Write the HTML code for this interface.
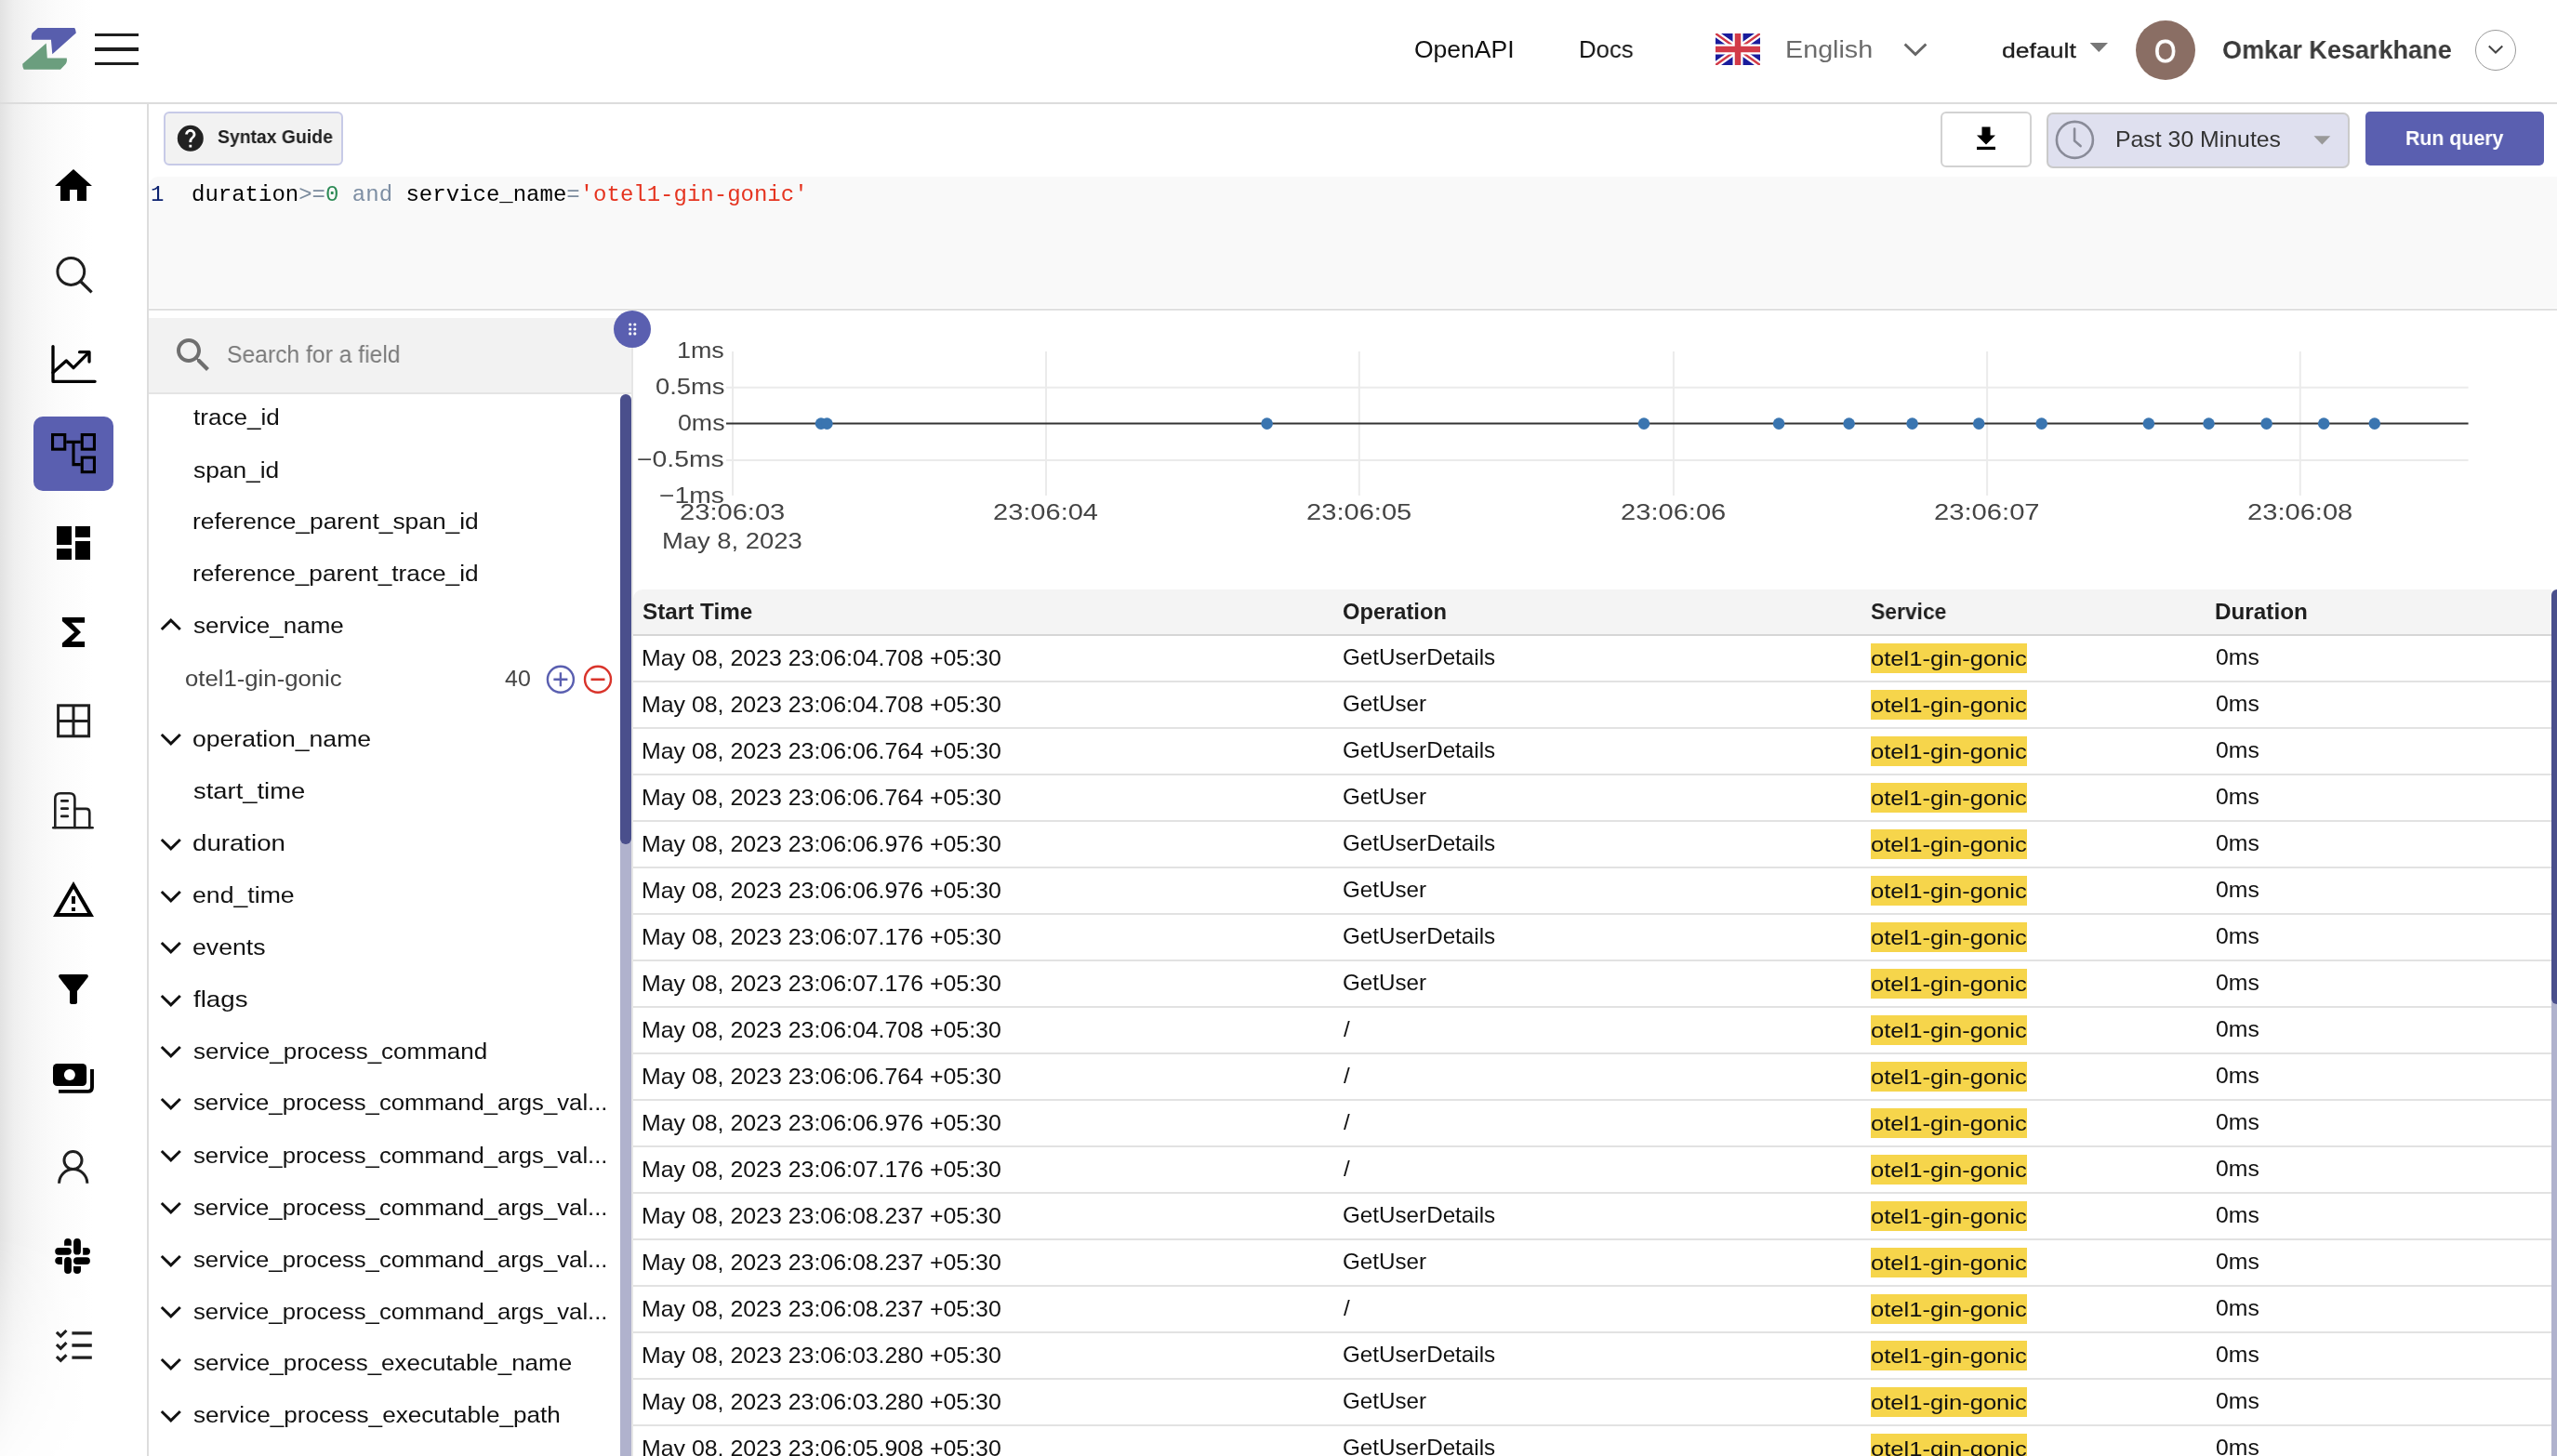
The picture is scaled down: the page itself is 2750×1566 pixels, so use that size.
<!DOCTYPE html>
<html><head><meta charset="utf-8"><style>
html,body{margin:0;padding:0;}
body{width:2750px;height:1566px;position:relative;overflow:hidden;background:#fff;font-family:"Liberation Sans",sans-serif;}
.t{position:absolute;white-space:nowrap;line-height:1;transform-origin:0 0;will-change:transform;}
svg{overflow:visible;}
</style></head><body>
<div style="position:absolute;left:0.0px;top:0.0px;width:100.0px;height:1566.0px;background:linear-gradient(to right,#e2e2e2 0px,#efefef 15px,#f6f6f6 35px,#fbfbfb 60px,#ffffff 100px);-webkit-mask-image:linear-gradient(to bottom,#000 0px,#000 1330px,rgba(0,0,0,0.55) 1450px,rgba(0,0,0,0.1) 1566px);"></div>
<div style="position:absolute;left:0.0px;top:110.0px;width:2750.0px;height:2.0px;background:#dcdcdc;"></div>
<div style="position:absolute;left:158.0px;top:112.0px;width:2.0px;height:1454.0px;background:#dddddd;"></div>
<svg style="position:absolute;left:0px;top:0px" width="100" height="100" viewBox="0 0 100 100"><path fill="#585ead" d="M40.8 30.1 L80.1 30.1 Q81.2 31 81.8 35.6 L56.3 58.2 L54.9 42.8 L34 42.8 Q33.3 38.5 34.5 35.8 Z"/><path fill="#6b9e7e" d="M49.7 46.5 L50.8 62.4 L71.8 62.4 Q72.5 67 70 69.5 L65 74.7 L25.7 74.7 Q24 72 24.2 68.8 Z"/></svg>
<div style="position:absolute;left:102.0px;top:35.7px;width:46.6px;height:3.8px;background:#1e1e1e;"></div>
<div style="position:absolute;left:102.0px;top:51.1px;width:46.6px;height:3.8px;background:#1e1e1e;"></div>
<div style="position:absolute;left:102.0px;top:66.5px;width:46.6px;height:3.8px;background:#1e1e1e;"></div>
<div class="t" style="left:1520.74px;top:40.2px;font-size:26px;color:#111;font-weight:400;font-family:'Liberation Sans', sans-serif;transform:scaleX(1.0197);">OpenAPI</div>
<div class="t" style="left:1697.94px;top:40.2px;font-size:26px;color:#111;font-weight:400;font-family:'Liberation Sans', sans-serif;transform:scaleX(0.9898);">Docs</div>
<svg style="position:absolute;left:1845px;top:35.8px;overflow:hidden" width="48" height="34" viewBox="0 0 48 34"><rect width="48" height="34" fill="#1a1c9c"/><path d="M0 0L48 34M48 0L0 34" stroke="#fff" stroke-width="7"/><path d="M0 0L48 34M48 0L0 34" stroke="#d23a48" stroke-width="2.5"/><path d="M24 0V34M0 17H48" stroke="#fff" stroke-width="11"/><path d="M24 0V34M0 17H48" stroke="#d23a48" stroke-width="6.5"/></svg>
<div class="t" style="left:1920.10px;top:40.2px;font-size:26px;color:#6b6b6b;font-weight:400;font-family:'Liberation Sans', sans-serif;transform:scaleX(1.1048);">English</div>
<svg style="position:absolute;left:2045px;top:44px" width="30" height="20" viewBox="0 0 30 20"><path d="M3.6 3.5 L15 14.5 L26.4 3.5" fill="none" stroke="#666" stroke-width="3"/></svg>
<div class="t" style="left:2153.14px;top:42.5px;font-size:22.8px;color:#1e1e1e;font-weight:400;font-family:'Liberation Sans', sans-serif;transform:scaleX(1.1658);-webkit-text-stroke:0.3px #1e1e1e;">default</div>
<svg style="position:absolute;left:2246px;top:45px" width="24" height="13" viewBox="0 0 24 13"><path d="M1.6 0.9 L21 0.9 L11.3 11Z" fill="#777"/></svg>
<div style="position:absolute;left:2296.8px;top:21.9px;width:64px;height:64px;border-radius:50%;background:#8a6e64;"></div>
<div class="t" style="left:2317.29px;top:37.7px;font-size:35.5px;color:#fff;font-weight:400;font-family:'Liberation Sans', sans-serif;transform:scaleX(0.8492);-webkit-text-stroke:0.9px #fff;">O</div>
<div class="t" style="left:2389.62px;top:39.6px;font-size:27.5px;color:#3a3a3a;font-weight:700;font-family:'Liberation Sans', sans-serif;transform:scaleX(0.9840);">Omkar Kesarkhane</div>
<div style="position:absolute;left:2661.8px;top:31.7px;width:44.4px;height:44.4px;border-radius:50%;border:1px solid #9a9a9a;box-sizing:border-box;"></div>
<svg style="position:absolute;left:2670px;top:44px" width="30" height="20" viewBox="0 0 30 20"><path d="M6.8 5.5 L14 12.5 L21.3 5.5" fill="none" stroke="#444" stroke-width="2"/></svg>
<div style="position:absolute;left:36.0px;top:448.0px;width:86.0px;height:80.0px;background:#5a5fb0;border-radius:10px;"></div>
<svg style="position:absolute;left:55px;top:176px" width="48" height="48" viewBox="0 0 24 24"><path d="M10 20v-6h4v6h5v-8h3L12 3 2 12h3v8z" fill="#000"/></svg>
<svg style="position:absolute;left:55px;top:272px" width="48" height="48" viewBox="0 96 48 48"><circle cx="21.3" cy="116" r="14.4" fill="none" stroke="#1f1f1f" stroke-width="3"/><path d="M32 127 L43.6 138.4" stroke="#1f1f1f" stroke-width="3.2"/></svg>
<svg style="position:absolute;left:55px;top:368px" width="48" height="48" viewBox="0 0 48 48"><g fill="none" stroke="#000" stroke-width="3.3" stroke-linecap="round" stroke-linejoin="round"><path d="M2 4.6 V42.3 H47.1"/><path d="M2 32.7 L16.3 20 L24 27.7 L40.5 11.2"/><path d="M30.6 10.7 H41 V21"/></g></svg>
<svg style="position:absolute;left:55px;top:464px" width="48" height="48" viewBox="0 0 48 48"><g fill="none" stroke="#000" stroke-width="3.1"><rect x="1.55" y="3.55" width="13.2" height="15.6"/><rect x="33.25" y="3.55" width="13.2" height="15.6"/><rect x="33.25" y="28.05" width="13.2" height="15.6"/><path d="M16.3 11.4 H31.7 M24 11.4 V35.6 H31.7"/></g></svg>
<svg style="position:absolute;left:55px;top:560px" width="48" height="48" viewBox="0 0 24 24"><path d="M3 13h8V3H3v10zm0 8h8v-6H3v6zm10 0h8V11h-8v10zm0-18v6h8V3h-8z" fill="#000"/></svg>
<svg style="position:absolute;left:55px;top:656px" width="48" height="48" viewBox="0 0 48 48"><path d="M11.9 8 H36.1 V13.8 H21.8 L32 24 L21.8 33.9 H36.1 V39.9 H11.9 V35.8 L25.1 24 L11.9 12.1 Z" fill="#000"/></svg>
<svg style="position:absolute;left:55px;top:752px" width="48" height="48" viewBox="0 0 48 48"><g fill="none" stroke="#1f1f1f" stroke-width="3"><rect x="7.6" y="6.8" width="33" height="33"/><path d="M24 6.8 V39.8 M7.6 23.4 H40.6"/></g></svg>
<svg style="position:absolute;left:55px;top:848px" width="48" height="48" viewBox="0 0 48 48"><g fill="none" stroke="#1f1f1f" stroke-width="2.6" stroke-linecap="round"><path d="M4.3 42 V11 Q4.3 5.3 10 5.3 H19.8 Q25.4 5.3 25.4 11 V42"/><path d="M25.4 21.9 H37.5 Q41.3 21.9 41.3 26 V42"/><path d="M2.3 42.2 H44.6"/><path d="M11.3 13.4 H17.7 M11.3 21.7 H17.7 M11.3 29.9 H17.7" stroke-width="2.8"/></g></svg>
<svg style="position:absolute;left:55px;top:944px" width="48" height="48" viewBox="0 0 24 24"><path d="M12 5.99L19.53 19H4.47L12 5.99M12 2L1 21h22L12 2zm1 14h-2v2h2v-2zm0-6h-2v4h2v-4z" fill="#000"/></svg>
<svg style="position:absolute;left:55px;top:1040px" width="48" height="48" viewBox="0 0 24 24"><path d="M4.25 5.61C6.27 8.2 10 13 10 13v6c0 .55.45 1 1 1h2c.55 0 1-.45 1-1v-6s3.72-4.8 5.74-7.39c.51-.66.04-1.61-.79-1.61H5.04c-.83 0-1.3.95-.79 1.61z" fill="#000"/></svg>
<svg style="position:absolute;left:55px;top:1136px" width="48" height="48" viewBox="0 0 48 48"><rect x="2" y="8" width="36.1" height="24" rx="4.5" fill="#000"/><circle cx="19.9" cy="20" r="6" fill="#fff"/><path d="M44 13.9 V33.5 Q44 37.9 39.5 37.9 H8.1" fill="none" stroke="#000" stroke-width="3.9"/></svg>
<svg style="position:absolute;left:55px;top:1232px" width="48" height="48" viewBox="0 0 48 48"><g fill="none" stroke="#1f1f1f" stroke-width="3"><circle cx="23.5" cy="16" r="9.5"/><path d="M8.6 40.7 A15 15 0 0 1 38.8 40.7"/></g></svg>
<svg style="position:absolute;left:55px;top:1328px" width="48" height="48" viewBox="0 0 48 48"><g stroke="#000" stroke-width="7.8" stroke-linecap="round"><path d="M28 7.9 V17.7 M18 27.9 V38 M8.1 17.85 H17.9 M27.9 28.05 H38"/></g><g fill="#000"><path d="M21.8 11.7 H14.1 V7.9 A3.85 3.85 0 0 1 21.8 7.9 Z"/><path d="M34.2 21.8 V13.9 H38 A3.9 3.9 0 0 1 38 21.8 Z"/><path d="M4.2 28.05 A3.85 3.85 0 0 1 8.05 24.1 H11.9 V32 H8.05 A3.85 3.85 0 0 1 4.2 28.05 Z"/><path d="M24 34 H32 V38 A4 4 0 0 1 24 38 Z"/></g></svg>
<svg style="position:absolute;left:55px;top:1424px" width="48" height="48" viewBox="0 0 48 48"><g fill="none" stroke="#1f1f1f" stroke-width="3.3"><path d="M22.4 9.8 H43.8 M22.4 23 H43.8 M22.4 36.1 H43.8"/><path d="M5.9 8.9 L10.3 13.1 L16.4 7 M5.9 22.1 L10.3 26.3 L16.4 20.2 M5.9 35.2 L10.3 39.4 L16.4 33.3" stroke-width="3.1"/></g></svg>
<div style="position:absolute;left:176.4px;top:120px;width:193.1px;height:57.5px;box-sizing:border-box;border:2px solid #c7cae7;border-radius:6px;background:#f2f2f2;"></div>
<svg style="position:absolute;left:188.2px;top:131.8px" width="33.6" height="33.6" viewBox="0 0 24 24"><circle cx="12" cy="12" r="10" fill="#222"/><path fill="#fff" d="M13 19h-2v-2h2v2zm2.07-7.75l-.9.92C13.45 12.9 13 13.5 13 15h-2v-.5c0-1.1.45-2.1 1.17-2.83l1.24-1.26c.37-.36.59-.86.59-1.41 0-1.1-.9-2-2-2s-2 .9-2 2H8c0-2.21 1.79-4 4-4s4 1.79 4 4c0 .88-.36 1.68-.93 2.25z"/></svg>
<div class="t" style="left:234.31px;top:138.2px;font-size:19.8px;color:#1f1f1f;font-weight:700;font-family:'Liberation Sans', sans-serif;transform:scaleX(0.9799);">Syntax Guide</div>
<div style="position:absolute;left:2087.3px;top:120.3px;width:98px;height:59.4px;box-sizing:border-box;border:2px solid #d2d2d2;border-radius:6px;background:#fff;"></div>
<svg style="position:absolute;left:2124px;top:135px" width="24" height="28" viewBox="0 0 24 28"><path d="M7.5 1.5 H16.5 V10.5 H22 L12 20.5 L2 10.5 H7.5Z" fill="#000"/><rect x="2" y="22.8" width="20" height="3.3" fill="#000"/></svg>
<div style="position:absolute;left:2201.1px;top:120.6px;width:326.4px;height:60.7px;box-sizing:border-box;border:2px solid #cacaca;border-radius:7px;background:#dfe0ef;"></div>
<svg style="position:absolute;left:2209px;top:128px" width="46" height="46" viewBox="0 0 46 46"><circle cx="22.4" cy="22.4" r="19.5" fill="none" stroke="#898b98" stroke-width="2.6"/><path d="M22.1 10.6 V23.5 L28.6 29.1" fill="none" stroke="#898b98" stroke-width="2.6" stroke-linecap="round"/></svg>
<div class="t" style="left:2274.91px;top:137.7px;font-size:24.0px;color:#333;font-weight:400;font-family:'Liberation Sans', sans-serif;transform:scaleX(1.0345);">Past 30 Minutes</div>
<svg style="position:absolute;left:2486px;top:144px" width="24" height="14" viewBox="0 0 24 14"><path d="M2.5 2.2 H20.3 L11.4 11.5Z" fill="#999"/></svg>
<div style="position:absolute;left:2544px;top:120.1px;width:191.7px;height:57.7px;border-radius:5px;background:#5a5fb0;"></div>
<div class="t" style="left:2586.72px;top:137.7px;font-size:22.2px;color:#fff;font-weight:700;font-family:'Liberation Sans', sans-serif;transform:scaleX(0.9610);">Run query</div>
<div style="position:absolute;left:160.0px;top:190.0px;width:2590.0px;height:141.0px;background:#f9f9f9;border-top-left-radius:10px;"></div>
<div style="position:absolute;left:160.0px;top:331.5px;width:2590.0px;height:2.0px;background:#e0e0e0;"></div>
<div class="t" style="left:161.7px;top:197.6px;font-size:24px;color:#0b216f;font-weight:400;font-family:'Liberation Mono', monospace;">1</div>
<div class="t" style="left:205.5px;top:197.6px;font-size:24px;color:#000;font-weight:400;font-family:'Liberation Mono', monospace;"><span style="color:#000">duration</span><span style="color:#7b8b9d">&gt;=</span><span style="color:#2c8a55">0</span> <span style="color:#7d8ea3">and</span> <span style="color:#000">service_name</span><span style="color:#7b8b9d">=</span><span style="color:#e5331f">'otel1-gin-gonic'</span></div>
<div style="position:absolute;left:160.0px;top:341.6px;width:519.5px;height:80.4px;background:#f2f2f2;"></div>
<div style="position:absolute;left:160.0px;top:422.0px;width:519.5px;height:2.0px;background:#e4e4e4;"></div>
<svg style="position:absolute;left:183.9px;top:358px" width="48" height="48" viewBox="0 0 24 24"><path fill="#6f6f6f" d="M15.5 14h-.79l-.28-.27C15.41 12.59 16 11.11 16 9.5 16 5.91 13.09 3 9.5 3S3 5.91 3 9.5 5.91 16 9.5 16c1.61 0 3.09-.59 4.23-1.57l.27.28v.79l5 4.99L20.49 19l-4.99-5zm-6 0C7.01 14 5 11.99 5 9.5S7.01 5 9.5 5 14 7.01 14 9.5 11.99 14 9.5 14z"/></svg>
<div class="t" style="left:243.51px;top:369.1px;font-size:25.4px;color:#7a7a7a;font-weight:400;font-family:'Liberation Sans', sans-serif;transform:scaleX(0.9717);">Search for a field</div>
<div style="position:absolute;left:679.0px;top:333.5px;width:2.0px;height:1232.5px;background:#e6e6e6;"></div>
<div style="position:absolute;left:667.0px;top:900.0px;width:12.0px;height:666.0px;background:#b0b2cd;"></div>
<div style="position:absolute;left:667.0px;top:424.0px;width:12.0px;height:484.0px;background:#4a4f8c;border-radius:6px;"></div>
<div class="t" style="left:208.24px;top:437.1px;font-size:24.4px;color:#111;font-weight:400;font-family:'Liberation Sans', sans-serif;transform:scaleX(1.0682);">trace_id</div>
<div class="t" style="left:207.97px;top:493.5px;font-size:24.4px;color:#111;font-weight:400;font-family:'Liberation Sans', sans-serif;transform:scaleX(1.0800);">span_id</div>
<div class="t" style="left:206.92px;top:548.9px;font-size:24.4px;color:#111;font-weight:400;font-family:'Liberation Sans', sans-serif;transform:scaleX(1.0807);">reference_parent_span_id</div>
<div class="t" style="left:206.93px;top:605.4px;font-size:24.4px;color:#111;font-weight:400;font-family:'Liberation Sans', sans-serif;transform:scaleX(1.0752);">reference_parent_trace_id</div>
<div class="t" style="left:207.98px;top:660.6px;font-size:24.4px;color:#111;font-weight:400;font-family:'Liberation Sans', sans-serif;transform:scaleX(1.0656);">service_name</div>
<svg style="position:absolute;left:170px;top:663.3px" width="28" height="20" viewBox="0 0 28 20"><path d="M3.8 14 L13.8 4.2 L23.8 14" fill="none" stroke="#111" stroke-width="3"/></svg>
<div class="t" style="left:207.44px;top:782.7px;font-size:24.4px;color:#111;font-weight:400;font-family:'Liberation Sans', sans-serif;transform:scaleX(1.0894);">operation_name</div>
<svg style="position:absolute;left:170px;top:785.4px" width="28" height="20" viewBox="0 0 28 20"><path d="M3.8 5 L13.8 14.8 L23.8 5" fill="none" stroke="#111" stroke-width="3"/></svg>
<div class="t" style="left:207.95px;top:838.5px;font-size:24.4px;color:#111;font-weight:400;font-family:'Liberation Sans', sans-serif;transform:scaleX(1.1225);">start_time</div>
<div class="t" style="left:207.39px;top:895.3px;font-size:24.4px;color:#111;font-weight:400;font-family:'Liberation Sans', sans-serif;transform:scaleX(1.1336);">duration</div>
<svg style="position:absolute;left:170px;top:898.0px" width="28" height="20" viewBox="0 0 28 20"><path d="M3.8 5 L13.8 14.8 L23.8 5" fill="none" stroke="#111" stroke-width="3"/></svg>
<div class="t" style="left:207.43px;top:951.1px;font-size:24.4px;color:#111;font-weight:400;font-family:'Liberation Sans', sans-serif;transform:scaleX(1.0932);">end_time</div>
<svg style="position:absolute;left:170px;top:953.8px" width="28" height="20" viewBox="0 0 28 20"><path d="M3.8 5 L13.8 14.8 L23.8 5" fill="none" stroke="#111" stroke-width="3"/></svg>
<div class="t" style="left:207.43px;top:1006.6px;font-size:24.4px;color:#111;font-weight:400;font-family:'Liberation Sans', sans-serif;transform:scaleX(1.0929);">events</div>
<svg style="position:absolute;left:170px;top:1009.3px" width="28" height="20" viewBox="0 0 28 20"><path d="M3.8 5 L13.8 14.8 L23.8 5" fill="none" stroke="#111" stroke-width="3"/></svg>
<div class="t" style="left:208.22px;top:1062.9px;font-size:24.4px;color:#111;font-weight:400;font-family:'Liberation Sans', sans-serif;transform:scaleX(1.1352);">flags</div>
<svg style="position:absolute;left:170px;top:1065.6px" width="28" height="20" viewBox="0 0 28 20"><path d="M3.8 5 L13.8 14.8 L23.8 5" fill="none" stroke="#111" stroke-width="3"/></svg>
<div class="t" style="left:207.98px;top:1118.7px;font-size:24.4px;color:#111;font-weight:400;font-family:'Liberation Sans', sans-serif;transform:scaleX(1.0649);">service_process_command</div>
<svg style="position:absolute;left:170px;top:1121.3999999999999px" width="28" height="20" viewBox="0 0 28 20"><path d="M3.8 5 L13.8 14.8 L23.8 5" fill="none" stroke="#111" stroke-width="3"/></svg>
<div class="t" style="left:207.99px;top:1174.4px;font-size:24.4px;color:#111;font-weight:400;font-family:'Liberation Sans', sans-serif;transform:scaleX(1.0533);">service_process_command_args_val...</div>
<svg style="position:absolute;left:170px;top:1177.1px" width="28" height="20" viewBox="0 0 28 20"><path d="M3.8 5 L13.8 14.8 L23.8 5" fill="none" stroke="#111" stroke-width="3"/></svg>
<div class="t" style="left:207.99px;top:1230.7px;font-size:24.4px;color:#111;font-weight:400;font-family:'Liberation Sans', sans-serif;transform:scaleX(1.0533);">service_process_command_args_val...</div>
<svg style="position:absolute;left:170px;top:1233.3999999999999px" width="28" height="20" viewBox="0 0 28 20"><path d="M3.8 5 L13.8 14.8 L23.8 5" fill="none" stroke="#111" stroke-width="3"/></svg>
<div class="t" style="left:207.99px;top:1286.7px;font-size:24.4px;color:#111;font-weight:400;font-family:'Liberation Sans', sans-serif;transform:scaleX(1.0533);">service_process_command_args_val...</div>
<svg style="position:absolute;left:170px;top:1289.3999999999999px" width="28" height="20" viewBox="0 0 28 20"><path d="M3.8 5 L13.8 14.8 L23.8 5" fill="none" stroke="#111" stroke-width="3"/></svg>
<div class="t" style="left:207.99px;top:1343.0px;font-size:24.4px;color:#111;font-weight:400;font-family:'Liberation Sans', sans-serif;transform:scaleX(1.0533);">service_process_command_args_val...</div>
<svg style="position:absolute;left:170px;top:1345.7px" width="28" height="20" viewBox="0 0 28 20"><path d="M3.8 5 L13.8 14.8 L23.8 5" fill="none" stroke="#111" stroke-width="3"/></svg>
<div class="t" style="left:207.99px;top:1398.7px;font-size:24.4px;color:#111;font-weight:400;font-family:'Liberation Sans', sans-serif;transform:scaleX(1.0533);">service_process_command_args_val...</div>
<svg style="position:absolute;left:170px;top:1401.3999999999999px" width="28" height="20" viewBox="0 0 28 20"><path d="M3.8 5 L13.8 14.8 L23.8 5" fill="none" stroke="#111" stroke-width="3"/></svg>
<div class="t" style="left:207.98px;top:1454.4px;font-size:24.4px;color:#111;font-weight:400;font-family:'Liberation Sans', sans-serif;transform:scaleX(1.0648);">service_process_executable_name</div>
<svg style="position:absolute;left:170px;top:1457.1px" width="28" height="20" viewBox="0 0 28 20"><path d="M3.8 5 L13.8 14.8 L23.8 5" fill="none" stroke="#111" stroke-width="3"/></svg>
<div class="t" style="left:207.98px;top:1510.4px;font-size:24.4px;color:#111;font-weight:400;font-family:'Liberation Sans', sans-serif;transform:scaleX(1.0703);">service_process_executable_path</div>
<svg style="position:absolute;left:170px;top:1513.1px" width="28" height="20" viewBox="0 0 28 20"><path d="M3.8 5 L13.8 14.8 L23.8 5" fill="none" stroke="#111" stroke-width="3"/></svg>
<div class="t" style="left:199.47px;top:717.8px;font-size:24.7px;color:#444;font-weight:400;font-family:'Liberation Sans', sans-serif;transform:scaleX(1.0415);">otel1-gin-gonic</div>
<div class="t" style="left:543.20px;top:717.8px;font-size:24.7px;color:#444;font-weight:400;font-family:'Liberation Sans', sans-serif;transform:scaleX(1.0120);">40</div>
<svg style="position:absolute;left:586px;top:714px" width="34" height="34" viewBox="0 0 34 34"><circle cx="16.9" cy="16.8" r="14" fill="none" stroke="#5a5fb0" stroke-width="2.4"/><path d="M16.9 9.3 V24.3 M9.4 16.8 H24.4" stroke="#5a5fb0" stroke-width="2.4"/></svg>
<svg style="position:absolute;left:626px;top:714px" width="34" height="34" viewBox="0 0 34 34"><circle cx="17" cy="16.8" r="14" fill="none" stroke="#d9342b" stroke-width="2.4"/><path d="M9.5 16.8 H24.5" stroke="#d9342b" stroke-width="2.6"/></svg>
<div style="position:absolute;left:659.8px;top:334px;width:40px;height:40px;border-radius:50%;background:#5a5fb0;"></div>
<svg style="position:absolute;left:672px;top:346px" width="16" height="16" viewBox="0 0 16 16"><g fill="#fff"><circle cx="5.7" cy="3" r="1.6"/><circle cx="10.8" cy="3" r="1.6"/><circle cx="5.7" cy="8" r="1.6"/><circle cx="10.8" cy="8" r="1.6"/><circle cx="5.7" cy="12.9" r="1.6"/><circle cx="10.8" cy="12.9" r="1.6"/></g></svg>
<svg style="position:absolute;left:0;top:0" width="2750" height="1566"><path d="M788 378 V533" stroke="#ebebeb" stroke-width="2"/><path d="M1125 378 V533" stroke="#ebebeb" stroke-width="2"/><path d="M1461.8 378 V533" stroke="#ebebeb" stroke-width="2"/><path d="M1799.9 378 V533" stroke="#ebebeb" stroke-width="2"/><path d="M2137.1 378 V533" stroke="#ebebeb" stroke-width="2"/><path d="M2473.8 378 V533" stroke="#ebebeb" stroke-width="2"/><path d="M781 416.7 H2654.6" stroke="#ebebeb" stroke-width="2"/><path d="M781 494.9 H2654.6" stroke="#ebebeb" stroke-width="2"/><path d="M781 455.6 H2654.6" stroke="#333" stroke-width="2"/><circle cx="883" cy="455.6" r="6.3" fill="#3a75b0"/><circle cx="889.4" cy="455.6" r="6.3" fill="#3a75b0"/><circle cx="1362.6" cy="455.6" r="6.3" fill="#3a75b0"/><circle cx="1768" cy="455.6" r="6.3" fill="#3a75b0"/><circle cx="1913.1" cy="455.6" r="6.3" fill="#3a75b0"/><circle cx="1988.6" cy="455.6" r="6.3" fill="#3a75b0"/><circle cx="2056.6" cy="455.6" r="6.3" fill="#3a75b0"/><circle cx="2128.2" cy="455.6" r="6.3" fill="#3a75b0"/><circle cx="2195.7" cy="455.6" r="6.3" fill="#3a75b0"/><circle cx="2310.9" cy="455.6" r="6.3" fill="#3a75b0"/><circle cx="2375.5" cy="455.6" r="6.3" fill="#3a75b0"/><circle cx="2437.6" cy="455.6" r="6.3" fill="#3a75b0"/><circle cx="2499.2" cy="455.6" r="6.3" fill="#3a75b0"/><circle cx="2553.8" cy="455.6" r="6.3" fill="#3a75b0"/></svg>
<div class="t" style="left:728.42px;top:366.2px;font-size:23.5px;color:#444;font-weight:400;font-family:'Liberation Sans', sans-serif;transform:scaleX(1.1440);">1ms</div>
<div class="t" style="left:704.78px;top:404.7px;font-size:23.5px;color:#444;font-weight:400;font-family:'Liberation Sans', sans-serif;transform:scaleX(1.1632);">0.5ms</div>
<div class="t" style="left:728.70px;top:443.6px;font-size:23.5px;color:#444;font-weight:400;font-family:'Liberation Sans', sans-serif;transform:scaleX(1.1376);">0ms</div>
<div class="t" style="left:685.47px;top:482.7px;font-size:23.5px;color:#444;font-weight:400;font-family:'Liberation Sans', sans-serif;transform:scaleX(1.2067);">−0.5ms</div>
<div class="t" style="left:709.37px;top:521.5px;font-size:23.5px;color:#444;font-weight:400;font-family:'Liberation Sans', sans-serif;transform:scaleX(1.2023);">−1ms</div>
<div class="t" style="left:731.14px;top:539.6px;font-size:23.5px;color:#444;font-weight:400;font-family:'Liberation Sans', sans-serif;transform:scaleX(1.2387);">23:06:03</div>
<div class="t" style="left:1068.15px;top:539.6px;font-size:23.5px;color:#444;font-weight:400;font-family:'Liberation Sans', sans-serif;transform:scaleX(1.2354);">23:06:04</div>
<div class="t" style="left:1404.94px;top:539.6px;font-size:23.5px;color:#444;font-weight:400;font-family:'Liberation Sans', sans-serif;transform:scaleX(1.2387);">23:06:05</div>
<div class="t" style="left:1743.04px;top:539.6px;font-size:23.5px;color:#444;font-weight:400;font-family:'Liberation Sans', sans-serif;transform:scaleX(1.2387);">23:06:06</div>
<div class="t" style="left:2080.24px;top:539.6px;font-size:23.5px;color:#444;font-weight:400;font-family:'Liberation Sans', sans-serif;transform:scaleX(1.2419);">23:06:07</div>
<div class="t" style="left:2416.94px;top:539.6px;font-size:23.5px;color:#444;font-weight:400;font-family:'Liberation Sans', sans-serif;transform:scaleX(1.2387);">23:06:08</div>
<div class="t" style="left:711.61px;top:570.5px;font-size:23px;color:#444;font-weight:400;font-family:'Liberation Sans', sans-serif;transform:scaleX(1.1912);">May 8, 2023</div>
<div style="position:absolute;left:681.0px;top:634.0px;width:2063.0px;height:48.0px;background:#f4f4f4;border-top-left-radius:10px;"></div>
<div style="position:absolute;left:681.0px;top:682.0px;width:2063.0px;height:2.0px;background:#d6d6d6;"></div>
<div class="t" style="left:691.41px;top:647.0px;font-size:23.7px;color:#1f1f1f;font-weight:700;font-family:'Liberation Sans', sans-serif;transform:scaleX(1.0256);">Start Time</div>
<div class="t" style="left:1443.95px;top:646.9px;font-size:23.7px;color:#1f1f1f;font-weight:700;font-family:'Liberation Sans', sans-serif;transform:scaleX(0.9997);">Operation</div>
<div class="t" style="left:2012.14px;top:647.0px;font-size:23.7px;color:#1f1f1f;font-weight:700;font-family:'Liberation Sans', sans-serif;transform:scaleX(0.9658);">Service</div>
<div class="t" style="left:2381.94px;top:647.0px;font-size:23.7px;color:#1f1f1f;font-weight:700;font-family:'Liberation Sans', sans-serif;transform:scaleX(1.0247);">Duration</div>
<div style="position:absolute;left:681.0px;top:732.0px;width:2063.0px;height:2.0px;background:#e2e2e2;"></div>
<div class="t" style="left:689.91px;top:695.7px;font-size:23.8px;color:#111;font-weight:400;font-family:'Liberation Sans', sans-serif;transform:scaleX(1.0458);">May 08, 2023 23:06:04.708 +05:30</div>
<div class="t" style="left:1443.69px;top:696.2px;font-size:23.2px;color:#111;font-weight:400;font-family:'Liberation Sans', sans-serif;transform:scaleX(1.0442);">GetUserDetails</div>
<div style="position:absolute;left:2012.0px;top:692.0px;width:168.0px;height:32.0px;background:#f6d54b;"></div>
<div class="t" style="left:2011.98px;top:696.5px;font-size:22.8px;color:#111;font-weight:400;font-family:'Liberation Sans', sans-serif;transform:scaleX(1.1222);">otel1-gin-gonic</div>
<div class="t" style="left:2382.66px;top:696.0px;font-size:23.4px;color:#111;font-weight:400;font-family:'Liberation Sans', sans-serif;transform:scaleX(1.0584);">0ms</div>
<div style="position:absolute;left:681.0px;top:782.0px;width:2063.0px;height:2.0px;background:#e2e2e2;"></div>
<div class="t" style="left:689.91px;top:745.7px;font-size:23.8px;color:#111;font-weight:400;font-family:'Liberation Sans', sans-serif;transform:scaleX(1.0458);">May 08, 2023 23:06:04.708 +05:30</div>
<div class="t" style="left:1443.69px;top:746.2px;font-size:23.2px;color:#111;font-weight:400;font-family:'Liberation Sans', sans-serif;transform:scaleX(1.0442);">GetUser</div>
<div style="position:absolute;left:2012.0px;top:742.0px;width:168.0px;height:32.0px;background:#f6d54b;"></div>
<div class="t" style="left:2011.98px;top:746.5px;font-size:22.8px;color:#111;font-weight:400;font-family:'Liberation Sans', sans-serif;transform:scaleX(1.1222);">otel1-gin-gonic</div>
<div class="t" style="left:2382.66px;top:746.0px;font-size:23.4px;color:#111;font-weight:400;font-family:'Liberation Sans', sans-serif;transform:scaleX(1.0584);">0ms</div>
<div style="position:absolute;left:681.0px;top:832.0px;width:2063.0px;height:2.0px;background:#e2e2e2;"></div>
<div class="t" style="left:689.91px;top:795.7px;font-size:23.8px;color:#111;font-weight:400;font-family:'Liberation Sans', sans-serif;transform:scaleX(1.0458);">May 08, 2023 23:06:06.764 +05:30</div>
<div class="t" style="left:1443.69px;top:796.2px;font-size:23.2px;color:#111;font-weight:400;font-family:'Liberation Sans', sans-serif;transform:scaleX(1.0442);">GetUserDetails</div>
<div style="position:absolute;left:2012.0px;top:792.0px;width:168.0px;height:32.0px;background:#f6d54b;"></div>
<div class="t" style="left:2011.98px;top:796.5px;font-size:22.8px;color:#111;font-weight:400;font-family:'Liberation Sans', sans-serif;transform:scaleX(1.1222);">otel1-gin-gonic</div>
<div class="t" style="left:2382.66px;top:796.0px;font-size:23.4px;color:#111;font-weight:400;font-family:'Liberation Sans', sans-serif;transform:scaleX(1.0584);">0ms</div>
<div style="position:absolute;left:681.0px;top:882.0px;width:2063.0px;height:2.0px;background:#e2e2e2;"></div>
<div class="t" style="left:689.91px;top:845.7px;font-size:23.8px;color:#111;font-weight:400;font-family:'Liberation Sans', sans-serif;transform:scaleX(1.0458);">May 08, 2023 23:06:06.764 +05:30</div>
<div class="t" style="left:1443.69px;top:846.2px;font-size:23.2px;color:#111;font-weight:400;font-family:'Liberation Sans', sans-serif;transform:scaleX(1.0442);">GetUser</div>
<div style="position:absolute;left:2012.0px;top:842.0px;width:168.0px;height:32.0px;background:#f6d54b;"></div>
<div class="t" style="left:2011.98px;top:846.5px;font-size:22.8px;color:#111;font-weight:400;font-family:'Liberation Sans', sans-serif;transform:scaleX(1.1222);">otel1-gin-gonic</div>
<div class="t" style="left:2382.66px;top:846.0px;font-size:23.4px;color:#111;font-weight:400;font-family:'Liberation Sans', sans-serif;transform:scaleX(1.0584);">0ms</div>
<div style="position:absolute;left:681.0px;top:932.0px;width:2063.0px;height:2.0px;background:#e2e2e2;"></div>
<div class="t" style="left:689.91px;top:895.7px;font-size:23.8px;color:#111;font-weight:400;font-family:'Liberation Sans', sans-serif;transform:scaleX(1.0458);">May 08, 2023 23:06:06.976 +05:30</div>
<div class="t" style="left:1443.69px;top:896.2px;font-size:23.2px;color:#111;font-weight:400;font-family:'Liberation Sans', sans-serif;transform:scaleX(1.0442);">GetUserDetails</div>
<div style="position:absolute;left:2012.0px;top:892.0px;width:168.0px;height:32.0px;background:#f6d54b;"></div>
<div class="t" style="left:2011.98px;top:896.5px;font-size:22.8px;color:#111;font-weight:400;font-family:'Liberation Sans', sans-serif;transform:scaleX(1.1222);">otel1-gin-gonic</div>
<div class="t" style="left:2382.66px;top:896.0px;font-size:23.4px;color:#111;font-weight:400;font-family:'Liberation Sans', sans-serif;transform:scaleX(1.0584);">0ms</div>
<div style="position:absolute;left:681.0px;top:982.0px;width:2063.0px;height:2.0px;background:#e2e2e2;"></div>
<div class="t" style="left:689.91px;top:945.7px;font-size:23.8px;color:#111;font-weight:400;font-family:'Liberation Sans', sans-serif;transform:scaleX(1.0458);">May 08, 2023 23:06:06.976 +05:30</div>
<div class="t" style="left:1443.69px;top:946.2px;font-size:23.2px;color:#111;font-weight:400;font-family:'Liberation Sans', sans-serif;transform:scaleX(1.0442);">GetUser</div>
<div style="position:absolute;left:2012.0px;top:942.0px;width:168.0px;height:32.0px;background:#f6d54b;"></div>
<div class="t" style="left:2011.98px;top:946.5px;font-size:22.8px;color:#111;font-weight:400;font-family:'Liberation Sans', sans-serif;transform:scaleX(1.1222);">otel1-gin-gonic</div>
<div class="t" style="left:2382.66px;top:946.0px;font-size:23.4px;color:#111;font-weight:400;font-family:'Liberation Sans', sans-serif;transform:scaleX(1.0584);">0ms</div>
<div style="position:absolute;left:681.0px;top:1032.0px;width:2063.0px;height:2.0px;background:#e2e2e2;"></div>
<div class="t" style="left:689.91px;top:995.7px;font-size:23.8px;color:#111;font-weight:400;font-family:'Liberation Sans', sans-serif;transform:scaleX(1.0458);">May 08, 2023 23:06:07.176 +05:30</div>
<div class="t" style="left:1443.69px;top:996.2px;font-size:23.2px;color:#111;font-weight:400;font-family:'Liberation Sans', sans-serif;transform:scaleX(1.0442);">GetUserDetails</div>
<div style="position:absolute;left:2012.0px;top:992.0px;width:168.0px;height:32.0px;background:#f6d54b;"></div>
<div class="t" style="left:2011.98px;top:996.5px;font-size:22.8px;color:#111;font-weight:400;font-family:'Liberation Sans', sans-serif;transform:scaleX(1.1222);">otel1-gin-gonic</div>
<div class="t" style="left:2382.66px;top:996.0px;font-size:23.4px;color:#111;font-weight:400;font-family:'Liberation Sans', sans-serif;transform:scaleX(1.0584);">0ms</div>
<div style="position:absolute;left:681.0px;top:1082.0px;width:2063.0px;height:2.0px;background:#e2e2e2;"></div>
<div class="t" style="left:689.91px;top:1045.7px;font-size:23.8px;color:#111;font-weight:400;font-family:'Liberation Sans', sans-serif;transform:scaleX(1.0458);">May 08, 2023 23:06:07.176 +05:30</div>
<div class="t" style="left:1443.69px;top:1046.2px;font-size:23.2px;color:#111;font-weight:400;font-family:'Liberation Sans', sans-serif;transform:scaleX(1.0442);">GetUser</div>
<div style="position:absolute;left:2012.0px;top:1042.0px;width:168.0px;height:32.0px;background:#f6d54b;"></div>
<div class="t" style="left:2011.98px;top:1046.5px;font-size:22.8px;color:#111;font-weight:400;font-family:'Liberation Sans', sans-serif;transform:scaleX(1.1222);">otel1-gin-gonic</div>
<div class="t" style="left:2382.66px;top:1046.0px;font-size:23.4px;color:#111;font-weight:400;font-family:'Liberation Sans', sans-serif;transform:scaleX(1.0584);">0ms</div>
<div style="position:absolute;left:681.0px;top:1132.0px;width:2063.0px;height:2.0px;background:#e2e2e2;"></div>
<div class="t" style="left:689.91px;top:1095.7px;font-size:23.8px;color:#111;font-weight:400;font-family:'Liberation Sans', sans-serif;transform:scaleX(1.0458);">May 08, 2023 23:06:04.708 +05:30</div>
<div class="t" style="left:1444.90px;top:1096.2px;font-size:23.2px;color:#111;font-weight:400;font-family:'Liberation Sans', sans-serif;transform:scaleX(1.0442);">/</div>
<div style="position:absolute;left:2012.0px;top:1092.0px;width:168.0px;height:32.0px;background:#f6d54b;"></div>
<div class="t" style="left:2011.98px;top:1096.5px;font-size:22.8px;color:#111;font-weight:400;font-family:'Liberation Sans', sans-serif;transform:scaleX(1.1222);">otel1-gin-gonic</div>
<div class="t" style="left:2382.66px;top:1096.0px;font-size:23.4px;color:#111;font-weight:400;font-family:'Liberation Sans', sans-serif;transform:scaleX(1.0584);">0ms</div>
<div style="position:absolute;left:681.0px;top:1182.0px;width:2063.0px;height:2.0px;background:#e2e2e2;"></div>
<div class="t" style="left:689.91px;top:1145.7px;font-size:23.8px;color:#111;font-weight:400;font-family:'Liberation Sans', sans-serif;transform:scaleX(1.0458);">May 08, 2023 23:06:06.764 +05:30</div>
<div class="t" style="left:1444.90px;top:1146.2px;font-size:23.2px;color:#111;font-weight:400;font-family:'Liberation Sans', sans-serif;transform:scaleX(1.0442);">/</div>
<div style="position:absolute;left:2012.0px;top:1142.0px;width:168.0px;height:32.0px;background:#f6d54b;"></div>
<div class="t" style="left:2011.98px;top:1146.5px;font-size:22.8px;color:#111;font-weight:400;font-family:'Liberation Sans', sans-serif;transform:scaleX(1.1222);">otel1-gin-gonic</div>
<div class="t" style="left:2382.66px;top:1146.0px;font-size:23.4px;color:#111;font-weight:400;font-family:'Liberation Sans', sans-serif;transform:scaleX(1.0584);">0ms</div>
<div style="position:absolute;left:681.0px;top:1232.0px;width:2063.0px;height:2.0px;background:#e2e2e2;"></div>
<div class="t" style="left:689.91px;top:1195.7px;font-size:23.8px;color:#111;font-weight:400;font-family:'Liberation Sans', sans-serif;transform:scaleX(1.0458);">May 08, 2023 23:06:06.976 +05:30</div>
<div class="t" style="left:1444.90px;top:1196.2px;font-size:23.2px;color:#111;font-weight:400;font-family:'Liberation Sans', sans-serif;transform:scaleX(1.0442);">/</div>
<div style="position:absolute;left:2012.0px;top:1192.0px;width:168.0px;height:32.0px;background:#f6d54b;"></div>
<div class="t" style="left:2011.98px;top:1196.5px;font-size:22.8px;color:#111;font-weight:400;font-family:'Liberation Sans', sans-serif;transform:scaleX(1.1222);">otel1-gin-gonic</div>
<div class="t" style="left:2382.66px;top:1196.0px;font-size:23.4px;color:#111;font-weight:400;font-family:'Liberation Sans', sans-serif;transform:scaleX(1.0584);">0ms</div>
<div style="position:absolute;left:681.0px;top:1282.0px;width:2063.0px;height:2.0px;background:#e2e2e2;"></div>
<div class="t" style="left:689.91px;top:1245.7px;font-size:23.8px;color:#111;font-weight:400;font-family:'Liberation Sans', sans-serif;transform:scaleX(1.0458);">May 08, 2023 23:06:07.176 +05:30</div>
<div class="t" style="left:1444.90px;top:1246.2px;font-size:23.2px;color:#111;font-weight:400;font-family:'Liberation Sans', sans-serif;transform:scaleX(1.0442);">/</div>
<div style="position:absolute;left:2012.0px;top:1242.0px;width:168.0px;height:32.0px;background:#f6d54b;"></div>
<div class="t" style="left:2011.98px;top:1246.5px;font-size:22.8px;color:#111;font-weight:400;font-family:'Liberation Sans', sans-serif;transform:scaleX(1.1222);">otel1-gin-gonic</div>
<div class="t" style="left:2382.66px;top:1246.0px;font-size:23.4px;color:#111;font-weight:400;font-family:'Liberation Sans', sans-serif;transform:scaleX(1.0584);">0ms</div>
<div style="position:absolute;left:681.0px;top:1332.0px;width:2063.0px;height:2.0px;background:#e2e2e2;"></div>
<div class="t" style="left:689.91px;top:1295.7px;font-size:23.8px;color:#111;font-weight:400;font-family:'Liberation Sans', sans-serif;transform:scaleX(1.0458);">May 08, 2023 23:06:08.237 +05:30</div>
<div class="t" style="left:1443.69px;top:1296.2px;font-size:23.2px;color:#111;font-weight:400;font-family:'Liberation Sans', sans-serif;transform:scaleX(1.0442);">GetUserDetails</div>
<div style="position:absolute;left:2012.0px;top:1292.0px;width:168.0px;height:32.0px;background:#f6d54b;"></div>
<div class="t" style="left:2011.98px;top:1296.5px;font-size:22.8px;color:#111;font-weight:400;font-family:'Liberation Sans', sans-serif;transform:scaleX(1.1222);">otel1-gin-gonic</div>
<div class="t" style="left:2382.66px;top:1296.0px;font-size:23.4px;color:#111;font-weight:400;font-family:'Liberation Sans', sans-serif;transform:scaleX(1.0584);">0ms</div>
<div style="position:absolute;left:681.0px;top:1382.0px;width:2063.0px;height:2.0px;background:#e2e2e2;"></div>
<div class="t" style="left:689.91px;top:1345.7px;font-size:23.8px;color:#111;font-weight:400;font-family:'Liberation Sans', sans-serif;transform:scaleX(1.0458);">May 08, 2023 23:06:08.237 +05:30</div>
<div class="t" style="left:1443.69px;top:1346.2px;font-size:23.2px;color:#111;font-weight:400;font-family:'Liberation Sans', sans-serif;transform:scaleX(1.0442);">GetUser</div>
<div style="position:absolute;left:2012.0px;top:1342.0px;width:168.0px;height:32.0px;background:#f6d54b;"></div>
<div class="t" style="left:2011.98px;top:1346.5px;font-size:22.8px;color:#111;font-weight:400;font-family:'Liberation Sans', sans-serif;transform:scaleX(1.1222);">otel1-gin-gonic</div>
<div class="t" style="left:2382.66px;top:1346.0px;font-size:23.4px;color:#111;font-weight:400;font-family:'Liberation Sans', sans-serif;transform:scaleX(1.0584);">0ms</div>
<div style="position:absolute;left:681.0px;top:1432.0px;width:2063.0px;height:2.0px;background:#e2e2e2;"></div>
<div class="t" style="left:689.91px;top:1395.7px;font-size:23.8px;color:#111;font-weight:400;font-family:'Liberation Sans', sans-serif;transform:scaleX(1.0458);">May 08, 2023 23:06:08.237 +05:30</div>
<div class="t" style="left:1444.90px;top:1396.2px;font-size:23.2px;color:#111;font-weight:400;font-family:'Liberation Sans', sans-serif;transform:scaleX(1.0442);">/</div>
<div style="position:absolute;left:2012.0px;top:1392.0px;width:168.0px;height:32.0px;background:#f6d54b;"></div>
<div class="t" style="left:2011.98px;top:1396.5px;font-size:22.8px;color:#111;font-weight:400;font-family:'Liberation Sans', sans-serif;transform:scaleX(1.1222);">otel1-gin-gonic</div>
<div class="t" style="left:2382.66px;top:1396.0px;font-size:23.4px;color:#111;font-weight:400;font-family:'Liberation Sans', sans-serif;transform:scaleX(1.0584);">0ms</div>
<div style="position:absolute;left:681.0px;top:1482.0px;width:2063.0px;height:2.0px;background:#e2e2e2;"></div>
<div class="t" style="left:689.91px;top:1445.7px;font-size:23.8px;color:#111;font-weight:400;font-family:'Liberation Sans', sans-serif;transform:scaleX(1.0458);">May 08, 2023 23:06:03.280 +05:30</div>
<div class="t" style="left:1443.69px;top:1446.2px;font-size:23.2px;color:#111;font-weight:400;font-family:'Liberation Sans', sans-serif;transform:scaleX(1.0442);">GetUserDetails</div>
<div style="position:absolute;left:2012.0px;top:1442.0px;width:168.0px;height:32.0px;background:#f6d54b;"></div>
<div class="t" style="left:2011.98px;top:1446.5px;font-size:22.8px;color:#111;font-weight:400;font-family:'Liberation Sans', sans-serif;transform:scaleX(1.1222);">otel1-gin-gonic</div>
<div class="t" style="left:2382.66px;top:1446.0px;font-size:23.4px;color:#111;font-weight:400;font-family:'Liberation Sans', sans-serif;transform:scaleX(1.0584);">0ms</div>
<div style="position:absolute;left:681.0px;top:1532.0px;width:2063.0px;height:2.0px;background:#e2e2e2;"></div>
<div class="t" style="left:689.91px;top:1495.7px;font-size:23.8px;color:#111;font-weight:400;font-family:'Liberation Sans', sans-serif;transform:scaleX(1.0458);">May 08, 2023 23:06:03.280 +05:30</div>
<div class="t" style="left:1443.69px;top:1496.2px;font-size:23.2px;color:#111;font-weight:400;font-family:'Liberation Sans', sans-serif;transform:scaleX(1.0442);">GetUser</div>
<div style="position:absolute;left:2012.0px;top:1492.0px;width:168.0px;height:32.0px;background:#f6d54b;"></div>
<div class="t" style="left:2011.98px;top:1496.5px;font-size:22.8px;color:#111;font-weight:400;font-family:'Liberation Sans', sans-serif;transform:scaleX(1.1222);">otel1-gin-gonic</div>
<div class="t" style="left:2382.66px;top:1496.0px;font-size:23.4px;color:#111;font-weight:400;font-family:'Liberation Sans', sans-serif;transform:scaleX(1.0584);">0ms</div>
<div style="position:absolute;left:681.0px;top:1582.0px;width:2063.0px;height:2.0px;background:#e2e2e2;"></div>
<div class="t" style="left:689.91px;top:1545.7px;font-size:23.8px;color:#111;font-weight:400;font-family:'Liberation Sans', sans-serif;transform:scaleX(1.0458);">May 08, 2023 23:06:05.908 +05:30</div>
<div class="t" style="left:1443.69px;top:1546.2px;font-size:23.2px;color:#111;font-weight:400;font-family:'Liberation Sans', sans-serif;transform:scaleX(1.0442);">GetUserDetails</div>
<div style="position:absolute;left:2012.0px;top:1542.0px;width:168.0px;height:32.0px;background:#f6d54b;"></div>
<div class="t" style="left:2011.98px;top:1546.5px;font-size:22.8px;color:#111;font-weight:400;font-family:'Liberation Sans', sans-serif;transform:scaleX(1.1222);">otel1-gin-gonic</div>
<div class="t" style="left:2382.66px;top:1546.0px;font-size:23.4px;color:#111;font-weight:400;font-family:'Liberation Sans', sans-serif;transform:scaleX(1.0584);">0ms</div>
<div style="position:absolute;left:2744.0px;top:1070.0px;width:6.0px;height:496.0px;background:#b0b2cd;"></div>
<div style="position:absolute;left:2744.0px;top:634.0px;width:6.0px;height:446.0px;background:#4a4f8c;border-top-left-radius:6px;border-bottom-left-radius:6px;"></div>
</body></html>
